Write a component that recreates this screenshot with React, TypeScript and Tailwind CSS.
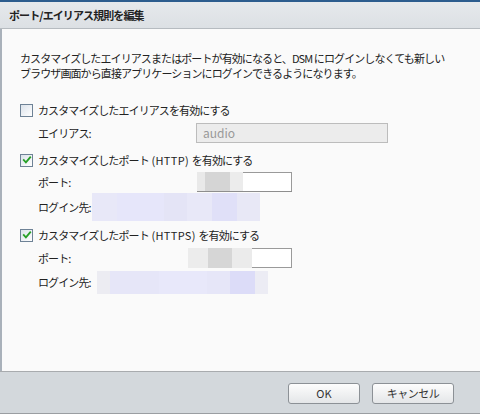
const font = { fontFamily: '"Noto Sans CJK JP", "Noto Sans", sans-serif' };

function CheckBox({ checked }: { checked: boolean }) {
    return (
        <div className="w-[13px] h-[13px] border border-[#6e8296] bg-gradient-to-br from-[#dce3eb] to-white flex items-center justify-center shrink-0">
            {checked && (
                <svg viewBox="0 0 11 11" className="w-[10px] h-[10px]">
                    <path
                        d="M2 5.5 L4.3 8 L9 2.5"
                        fill="none"
                        stroke="#27a027"
                        strokeWidth="2"
                        strokeLinecap="square"
                    />
                </svg>
            )}
        </div>
    );
}

function Blocks({ items }: { items: [number, string][] }) {
    return (
        <>
            {items.map(([w, c], i) => (
                <div key={i} className="h-full shrink-0" style={{ width: w, background: c }} />
            ))}
        </>
    );
}

function App() {
    return (
        <div
            className="w-[480px] h-[414px] flex flex-col bg-[#fafafa] text-[11px] tracking-[-0.9px] text-[#222]"
            style={font}
        >
            <div className="h-[2px] bg-[#2d5d8e]" />
            <div className="h-[27px] flex items-center pl-[9px] bg-gradient-to-b from-[#e6e9ec] to-[#dce0e4] border-b border-[#b6bbc0] font-bold text-[#222]">
                ポート/エイリアス規則を編集
            </div>
            <div className="flex-1 flex flex-col border-l-2 border-[#a9b1ba] pl-[18px] pt-[22px]">
                <p className="leading-[15px]">
                    カスタマイズしたエイリアスまたはポートが有効になると、DSM にログインしなくても新しい
                    <br />
                    ブラウザ画面から直接アプリケーションにログインできるようになります。
                </p>

                <div className="mt-[19px] h-[20px] flex items-center gap-[5px]">
                    <CheckBox checked={false} />
                    <span>カスタマイズしたエイリアスを有効にする</span>
                </div>
                <div className="mt-[3px] h-[20px] flex items-center">
                    <span className="w-[176px] pl-[18px]">エイリアス:</span>
                    <div className="w-[192px] h-[20px] border border-[#bcbcbc] bg-[#ececec] text-[#999] text-[12px] tracking-normal pl-[6px] leading-[18px]">
                        audio
                    </div>
                </div>

                <div className="mt-[7px] h-[20px] flex items-center gap-[5px]">
                    <CheckBox checked={true} />
                    <span className="whitespace-pre">
                        カスタマイズしたポート<span className="tracking-[0.3px]"> (HTTP) </span>を有効にする
                    </span>
                </div>
                <div className="mt-[2px] h-[20px] flex items-center">
                    <span className="w-[177px] pl-[18px]">ポート:</span>
                    <div className="h-[20px] flex border-b border-[#8e8e8e]">
                        <Blocks items={[[8, "#e9e9e9"], [25, "#d5d5d5"], [13, "#ececec"]]} />
                        <div className="w-[49px] h-full bg-white border-t border-r border-[#9a9a9a]" />
                    </div>
                </div>
                <div className="mt-[1px] h-[28px] flex items-center">
                    <span className="w-[72px] pl-[18px]">ログイン先:</span>
                    <div className="h-full flex">
                        <Blocks
                            items={[
                                [25, "#e8e8f8"],
                                [47, "#e6e6fa"],
                                [23, "#e4e4f6"],
                                [25, "#e8e8f8"],
                                [25, "#e0e0f8"],
                                [23, "#e8e8f6"],
                            ]}
                        />
                    </div>
                </div>

                <div className="mt-[4px] h-[20px] flex items-center gap-[5px]">
                    <CheckBox checked={true} />
                    <span className="whitespace-pre">
                        カスタマイズしたポート<span className="tracking-[0.3px]"> (HTTPS) </span>を有効にする
                    </span>
                </div>
                <div className="mt-[3px] h-[20px] flex items-center">
                    <span className="w-[168px] pl-[18px]">ポート:</span>
                    <div className="h-[20px] flex">
                        <Blocks items={[[20, "#ececec"], [24, "#d6d6d6"], [20, "#ebebeb"]]} />
                        <div className="w-[40px] h-full bg-white border-t border-r border-b border-[#9a9a9a]" />
                    </div>
                </div>
                <div className="mt-[3px] h-[23px] flex items-center">
                    <span className="w-[77px] pl-[18px]">ログイン先:</span>
                    <div className="h-full flex">
                        <Blocks
                            items={[
                                [13, "#ececf2"],
                                [49, "#e6e6f8"],
                                [48, "#e8e8fa"],
                                [23, "#e6e6f8"],
                                [25, "#dcdcf8"],
                                [13, "#ececf4"],
                            ]}
                        />
                    </div>
                </div>
            </div>
            <div className="h-[43px] bg-[#d3d8dc] border-t border-[#a8abae] border-b border-b-[#9a9ea2] flex items-center justify-end gap-[12px] pr-[26px] pt-[1px]">
                <button className="w-[72px] h-[21px] rounded-[3px] border border-[#8c9196] bg-gradient-to-b from-[#fdfdfd] to-[#e4e6e8] text-[#333] tracking-normal">
                    OK
                </button>
                <button className="w-[82px] h-[21px] rounded-[3px] border border-[#8c9196] bg-gradient-to-b from-[#fdfdfd] to-[#e4e6e8] text-[#333] tracking-[-0.5px]">
                    キャンセル
                </button>
            </div>
        </div>
    );
}

export default App;
